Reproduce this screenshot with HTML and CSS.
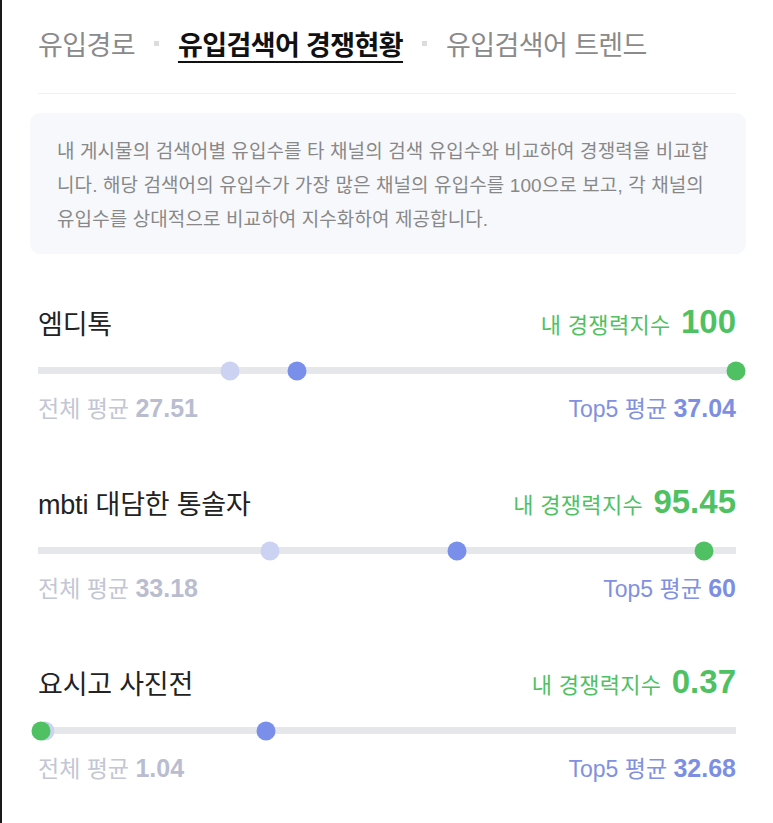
FILE: index.html
```html
<!DOCTYPE html>
<html lang="ko">
<head>
    <meta charset="UTF-8">
    <meta name="viewport" content="width=device-width, initial-scale=1.0">
    <title>유입검색어 경쟁현황</title>
    <link rel="stylesheet" href="styles.css">
</head>
<body>
    <div class="page">
        <div class="tabs">
            <span class="tab">유입경로</span>
            <span class="sep"></span>
            <span class="tab active">유입검색어 경쟁현황</span>
            <span class="sep"></span>
            <span class="tab">유입검색어 트렌드</span>
        </div>

        <div class="info">
            내 게시물의 검색어별 유입수를 타 채널의 검색 유입수와 비교하여 경쟁력을 비교합니다. 해당 검색어의 유입수가 가장 많은 채널의 유입수를 100으로 보고, 각 채널의 유입수를 상대적으로 비교하여 지수화하여 제공합니다.
        </div>

        <div class="keyword">
            <div class="kw-head">
                <p class="kw-name">엠디톡</p>
                <p class="kw-score">내 경쟁력지수 <b>100</b></p>
            </div>
            <div class="track">
                <span class="dot dot-avg" style="left: 27.51%"></span>
                <span class="dot dot-top" style="left: 37.04%"></span>
                <span class="dot dot-mine" style="left: 100%"></span>
            </div>
            <div class="kw-foot">
                <p class="avg">전체 평균 <b>27.51</b></p>
                <p class="top">Top5 평균 <b>37.04</b></p>
            </div>
        </div>

        <div class="keyword">
            <div class="kw-head">
                <p class="kw-name">mbti 대담한 통솔자</p>
                <p class="kw-score">내 경쟁력지수 <b>95.45</b></p>
            </div>
            <div class="track">
                <span class="dot dot-avg" style="left: 33.18%"></span>
                <span class="dot dot-top" style="left: 60%"></span>
                <span class="dot dot-mine" style="left: 95.45%"></span>
            </div>
            <div class="kw-foot">
                <p class="avg">전체 평균 <b>33.18</b></p>
                <p class="top">Top5 평균 <b>60</b></p>
            </div>
        </div>

        <div class="keyword">
            <div class="kw-head">
                <p class="kw-name">요시고 사진전</p>
                <p class="kw-score">내 경쟁력지수 <b>0.37</b></p>
            </div>
            <div class="track">
                <span class="dot dot-avg" style="left: 1.04%"></span>
                <span class="dot dot-top" style="left: 32.68%"></span>
                <span class="dot dot-mine" style="left: 0.37%"></span>
            </div>
            <div class="kw-foot">
                <p class="avg">전체 평균 <b>1.04</b></p>
                <p class="top">Top5 평균 <b>32.68</b></p>
            </div>
        </div>
    </div>
</body>
</html>
```

FILE: styles.css
```css
* {
    margin: 0;
    padding: 0;
    box-sizing: border-box;
}
body {
    background-color: white;
    border-left: 2px solid #1a1a1a;
    min-height: 823px;
    font-family: "Liberation Sans", "Noto Sans CJK KR", sans-serif;
}
.page {
    padding: 0 37px 0 36px;
}
.tabs {
    display: flex;
    align-items: center;
    gap: 19px;
    height: 94px;
    padding-bottom: 6px;
    border-bottom: 1px solid #f0f0f2;
    font-size: 27px;
    letter-spacing: -0.6px;
}
.tab {
    color: #8a8a8a;
}
.tab.active {
    color: #111;
    font-weight: bold;
    text-decoration: underline;
    text-underline-offset: 6px;
    text-decoration-thickness: 2px;
}
.sep {
    width: 5px;
    height: 5px;
    background-color: #dcdcdc;
}
.info {
    margin: 19px -10px 0 -8px;
    padding: 22px 27px 17px 27px;
    background-color: #f7f8fb;
    border-radius: 10px;
    color: #888;
    font-size: 19px;
    line-height: 34px;
    letter-spacing: 0.1px;
}
.keyword {
    margin-top: 48px;
}
.keyword + .keyword {
    margin-top: 62px;
}
.kw-head {
    display: flex;
    justify-content: space-between;
    align-items: center;
    height: 40px;
}
.kw-name {
    color: #222;
    font-size: 27px;
    letter-spacing: -0.2px;
}
.kw-score {
    color: #4fc162;
    font-size: 22px;
    letter-spacing: 0.3px;
}
.kw-score b {
    font-size: 33px;
    margin-left: 4px;
    letter-spacing: 0;
}
.track {
    position: relative;
    height: 7px;
    margin: 25px 0 0;
    background-color: #e6e7eb;
}
.dot {
    position: absolute;
    top: 50%;
    width: 19px;
    height: 19px;
    border-radius: 50%;
    transform: translate(-50%, -50%);
}
.dot-avg {
    background-color: #cbd2f2;
}
.dot-top {
    background-color: #7a8fea;
}
.dot-mine {
    background-color: #4fc162;
}
.kw-foot {
    display: flex;
    justify-content: space-between;
    align-items: center;
    height: 24px;
    line-height: 24px;
    margin-top: 22px;
    font-size: 23px;
}
.avg {
    color: #c3c6d3;
}
.avg b {
    color: #b9bdcf;
    font-size: 25px;
}
.top {
    color: #8191e0;
}
.top b {
    color: #7d8fe2;
    font-size: 25px;
}
```
